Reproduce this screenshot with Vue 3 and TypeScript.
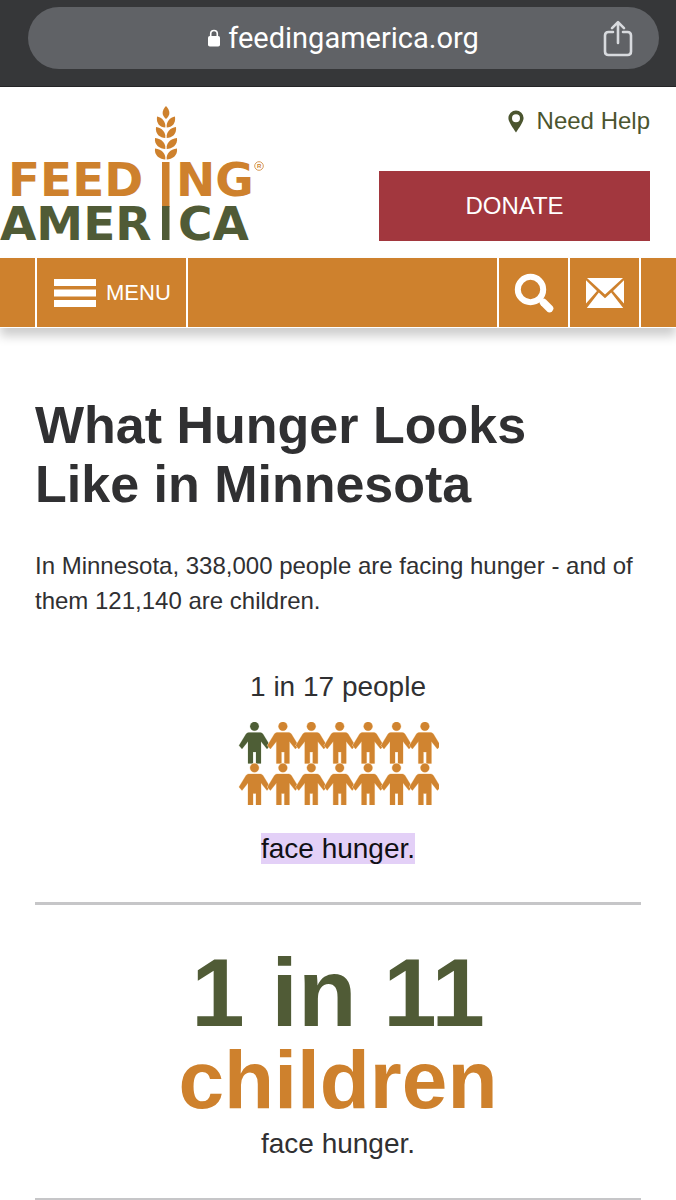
<script setup lang="ts">
interface Figure {
  x: number
  y: number
  highlighted: boolean
}

const perRow = 7
const rows = 2

const figures: Figure[] = Array.from({ length: perRow * rows }, (_, i) => ({
  x: 2 + (i % perRow) * 28.4,
  y: Math.floor(i / perRow) * 41.5,
  highlighted: i === 0,
}))

const grains = [
  { y: 22.5, w: 9 },
  { y: 33, w: 10 },
  { y: 44, w: 11 },
  { y: 54.5, w: 11 },
]

function grainPath(y: number, w: number, side: 1 | -1): string {
  const x = (d: number) => 166 + side * d
  return `M${x(0.7)} ${y}C${x(0)} ${y - 6} ${x(4)} ${y - 10} ${x(w)} ${y - 11}C${x(w + 1)} ${y - 4} ${x(6)} ${y} ${x(0.7)} ${y}Z`
}
</script>

<template>
  <div class="page">
    <div class="browser">
      <div class="address">
        <div class="site">
          <svg class="lock" viewBox="0 0 12 18" aria-hidden="true">
            <path d="M2.7 8V4.8a3.3 3.3 0 0 1 6.6 0V8" fill="none" stroke="#fff" stroke-width="1.6" />
            <rect x="0" y="7" width="12" height="10.5" rx="1.8" fill="#fff" />
          </svg>
          <span>feedingamerica.org</span>
        </div>
        <button class="share" type="button" aria-label="Share">
          <svg viewBox="0 0 30 37" aria-hidden="true">
            <path d="M10 12H5.5Q2 12 2 15.500V31.500Q2 35 5.500 35H24.500Q28 35 28 31.500V15.500Q28 12 24.500 12H20M15 23V2.500M9 8.200l6-6 6 6" />
          </svg>
        </button>
      </div>
    </div>

    <header class="header">
      <a class="logo" href="#" aria-label="Feeding America">
        <svg viewBox="0 0 266 138" aria-hidden="true">
          <g class="orange">
            <path d="M166 1C161.500 6 161.500 10 166 14C170.500 10 170.500 6 166 1Z" />
            <template v-for="g in grains" :key="g.y">
              <path :d="grainPath(g.y, g.w, -1)" />
              <path :d="grainPath(g.y, g.w, 1)" />
            </template>
            <text x="8" y="91">FEED</text>
            <rect x="162" y="57" width="7.500" height="45" />
            <text x="176" y="91">NG</text>
            <circle cx="259" cy="61" r="4.300" fill="none" stroke="#ce812d" stroke-width="0.800" />
            <text class="mark" x="257" y="63">R</text>
          </g>
          <g class="green">
            <text x="0" y="135">AMER</text>
            <rect x="162" y="101" width="7.500" height="34" />
            <text x="178" y="135">CA</text>
          </g>
        </svg>
      </a>
      <div class="actions">
        <a class="help" href="#">
          <svg viewBox="0 0 16 23" aria-hidden="true">
            <path fill-rule="evenodd" d="M8 0.500a7.600 7.600 0 0 1 7.600 7.600C15.600 12 11 18 8 22.500C5 18 0.400 12 0.400 8.100A7.600 7.600 0 0 1 8 0.500ZM8 4.200a4 4 0 1 0 0 8a4 4 0 0 0 0-8Z" />
          </svg>
          <span>Need Help</span>
        </a>
        <button class="donate" type="button">DONATE</button>
      </div>
    </header>

    <nav class="nav">
      <button class="menu" type="button">
        <svg viewBox="0 0 42 28" aria-hidden="true">
          <path d="M0 0H42V7H0ZM0 10.500H42V17.500H0ZM0 21H42V28H0Z" />
        </svg>
        <span>MENU</span>
      </button>
      <div class="tools">
        <button class="tool" type="button" aria-label="Search">
          <svg class="search" viewBox="0 0 40 40" aria-hidden="true">
            <circle cx="16.500" cy="16.500" r="12.700" fill="none" stroke="#fff" stroke-width="6" />
            <path d="M25 25L29 29" fill="none" stroke="#fff" stroke-width="5" />
            <path d="M29.500 29.500L35.500 35.500" fill="none" stroke="#fff" stroke-width="7.500" stroke-linecap="round" />
          </svg>
        </button>
        <button class="tool" type="button" aria-label="Email">
          <svg class="mail" viewBox="0 0 38 30" aria-hidden="true">
            <path d="M1 0H37L19 16.500ZM0 2.200L11 13L0 25.500ZM38 2.200L27 13L38 25.500ZM12.800 14.500L19 20.200L25.200 14.500L37.200 30H0.800Z" />
          </svg>
        </button>
      </div>
    </nav>

    <main class="content">
      <h1>What Hunger Looks Like in Minnesota</h1>
      <p class="intro">
        In Minnesota, 338,000 people are facing hunger - and of them 121,140 are children.
      </p>

      <section class="people">
        <p class="stat">1 in 17 people</p>
        <svg class="figures" viewBox="0 0 201 83" role="img" aria-label="One of a group of people highlighted">
          <g
            v-for="(f, i) in figures"
            :key="i"
            :class="f.highlighted ? 'person marked' : 'person'"
            :transform="`translate(${f.x} ${f.y})`"
          >
            <circle cx="14.500" cy="4.300" r="4.400" />
            <path d="M8.500 10.500H20.500Q22 10.500 23 12L30 23.500L27 27L21 19.500V41.500H16V30H13V41.500H8V19.500L2 27L-1 23.500L6 12Q7 10.500 8.500 10.500Z" />
          </g>
        </svg>
        <p class="stat"><mark>face hunger.</mark></p>
      </section>

      <hr />

      <section class="children">
        <p class="ratio">1 in 11</p>
        <p class="who">children</p>
        <p class="stat">face hunger.</p>
      </section>

      <hr />
    </main>
  </div>
</template>

<style>
body {
  margin: 0;
  background: #fff;
}
</style>

<style scoped>
.page {
  font-family: "Liberation Sans", Arial, sans-serif;
  color: #303032;
  background: #fff;
}

.page * {
  box-sizing: border-box;
}

button {
  margin: 0;
  padding: 0;
  border: 0;
  background: none;
  color: inherit;
  font: inherit;
}

a {
  text-decoration: none;
}

svg {
  display: block;
}

p,
h1 {
  margin: 0;
}

.browser {
  padding: 7px 17px 17px 28px;
  background: #363739;
  border-bottom: 1px solid #252527;
}

.address {
  display: grid;
  grid-template-columns: 1fr auto 1fr;
  align-items: center;
  height: 62px;
  border-radius: 31px;
  background: #606266;
}

.site {
  grid-column: 2;
  display: flex;
  align-items: center;
  gap: 8px;
  color: #fff;
  font: 29px/36px Roboto, sans-serif;
}

.lock {
  width: 12px;
  height: 18px;
}

.share {
  justify-self: end;
  margin-right: 26px;
}

.share svg {
  width: 30px;
  height: 37px;
  fill: none;
  stroke: #d8dade;
  stroke-width: 2.6;
  stroke-linecap: round;
  stroke-linejoin: round;
}

.header {
  display: flex;
  justify-content: space-between;
  padding: 18px 26px 15px 0;
}

.logo svg {
  width: 266px;
  height: 138px;
}

.logo text {
  font: bold 47px "DejaVu Sans", sans-serif;
}

.logo .mark {
  font: bold 6px "Liberation Sans", sans-serif;
}

.orange {
  fill: #ce812d;
}

.green {
  fill: #505b36;
}

.actions {
  display: flex;
  flex-direction: column;
  align-items: flex-end;
  gap: 34px;
}

.help {
  display: flex;
  align-items: center;
  gap: 13px;
  color: #4b552f;
  font-size: 24px;
  line-height: 32px;
}

.help svg {
  width: 16px;
  height: 23px;
  fill: #4b552f;
}

.donate {
  width: 271px;
  height: 70px;
  background: #a2373e;
  color: #fff;
  font-size: 24px;
}

.nav {
  display: flex;
  justify-content: space-between;
  height: 70px;
  padding: 0 35px;
  border-bottom: 1px solid #fff;
  background: #ce812d;
  box-shadow: 0 8px 10px rgba(0, 0, 0, 0.2);
}

.menu {
  display: flex;
  align-items: center;
  gap: 10px;
  padding: 0 15px 0 17px;
  border: solid #fff;
  border-width: 0 2px;
  color: #fff;
  font-size: 22px;
}

.menu svg {
  width: 42px;
  height: 28px;
  fill: #fff;
}

.tools {
  display: flex;
}

.tool {
  display: flex;
  align-items: center;
  justify-content: center;
  width: 71px;
  border-left: 2px solid #fff;
}

.tool:last-child {
  width: 73px;
  border-right: 2px solid #fff;
}

.search {
  width: 40px;
  height: 40px;
}

.mail {
  width: 38px;
  height: 30px;
  fill: #fff;
}

.content {
  padding: 68px 35px 0;
}

h1 {
  font-size: 52px;
  line-height: 59px;
}

.intro {
  margin-top: 34px;
  font-size: 24px;
  line-height: 35px;
}

.people {
  display: flex;
  flex-direction: column;
  align-items: center;
  padding: 52px 0 36px;
}

.stat {
  font-size: 28px;
  line-height: 34px;
}

.figures {
  width: 201px;
  height: 83px;
  margin: 18px 0 27px;
}

.person {
  fill: #d08430;
  stroke: #f8dcb8;
  stroke-width: 1;
  paint-order: stroke;
}

.marked {
  fill: #4e5e36;
  stroke: #dfe5d6;
}

mark {
  background: #e3d0f7;
  color: #101014;
}

hr {
  height: 3px;
  margin: 0;
  border: 0;
  background: #c6c6c8;
}

.children {
  padding: 42px 0 37px;
  text-align: center;
  font-weight: bold;
}

.ratio {
  color: #505b36;
  font-size: 96px;
  line-height: 92px;
}

.who {
  color: #ce812d;
  font-size: 82px;
  line-height: 82px;
}

.children .stat {
  margin-top: 6px;
  font-weight: normal;
}
</style>
